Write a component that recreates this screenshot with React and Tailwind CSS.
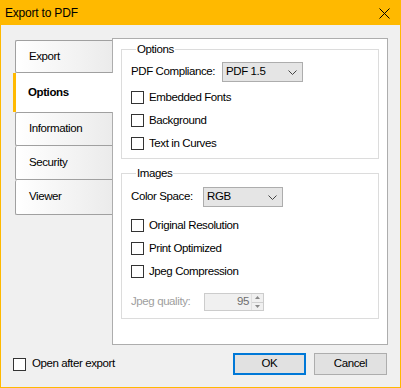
import React from "react";

const font = { fontFamily: '"Liberation Sans", Arial, sans-serif' };

function CheckBox({ label, className = "" }) {
  return (
    <div className={`flex items-center h-[23px] ${className}`}>
      <span className="w-[13px] h-[13px] border border-[#333] bg-white shrink-0" />
      <span className="ml-[5px] text-black whitespace-nowrap">{label}</span>
    </div>
  );
}

function Chevron() {
  return (
    <svg width="9" height="5" viewBox="0 0 9 5" className="shrink-0">
      <path d="M0.5 0.5 L4.5 4.5 L8.5 0.5" fill="none" stroke="#444" strokeWidth="1" />
    </svg>
  );
}

function Dropdown({ value, width }) {
  return (
    <div
      className={`flex items-center justify-between h-[20px] ${width} shrink-0 border border-[#adadad] bg-[#e5e5e5] pl-[3px] pr-[5px]`}
    >
      <span>{value}</span>
      <Chevron />
    </div>
  );
}

function Group({ title, children, className = "" }) {
  return (
    <fieldset className={`border border-[#dcdcdc] mx-[8px] px-[9px] ${className}`}>
      <legend className="ml-[5px] px-[1px] leading-[16px]">{title}</legend>
      {children}
    </fieldset>
  );
}

function Tab({ label, active, className = "" }) {
  if (active) {
    return (
      <div className="relative z-10 -mr-px h-[39px] flex items-center bg-white border-l-[3px] border-[#ffb900] pl-[12px] font-bold">
        {label}
      </div>
    );
  }
  return (
    <div
      className={`ml-[2px] flex items-center border-l border-[#a0a0a0] rounded-l-[2px] bg-linear-to-r from-white to-[#ebebeb] pl-[13px] ${className}`}
    >
      {label}
    </div>
  );
}

export default function App() {
  return (
    <div
      className="w-[401px] h-[388px] border border-[#ffb900] bg-[#f0f0f0] flex flex-col text-[11.5px] tracking-[-0.4px] text-black whitespace-nowrap"
      style={font}
    >
      <div className="h-[24px] bg-[#ffb900] flex items-center justify-between pl-[4px] pr-[10px]">
        <span className="text-[12px] tracking-[-0.2px]">Export to PDF</span>
        <svg width="11" height="11" viewBox="0 0 11 11">
          <path d="M0.5 0.5 L10.5 10.5 M10.5 0.5 L0.5 10.5" stroke="#000" strokeWidth="1" />
        </svg>
      </div>

      <div className="flex mt-[13px] pl-[12px] pr-[12px]">
        <div className="w-[99px] mt-[2px] flex flex-col">
          <Tab label="Export" className="h-[33px] border-t border-b" />
          <Tab label="Options" active />
          <Tab label="Information" className="h-[34px] border-t border-b" />
          <Tab label="Security" className="h-[34px] border-b" />
          <Tab label="Viewer" className="h-[35px] border-b" />
        </div>

        <div className="w-[276px] h-[307px] border border-[#adadad] bg-white flex flex-col">
          <Group title="Options" className="mt-[2px] pb-[3px]">
            <div className="flex items-center mt-[5px]">
              <span className="w-[91px]">PDF Compliance:</span>
              <Dropdown value="PDF 1.5" width="w-[81px]" />
            </div>
            <div className="mt-[4px]">
              <CheckBox label="Embedded Fonts" />
              <CheckBox label="Background" />
              <CheckBox label="Text in Curves" />
            </div>
          </Group>

          <Group title="Images" className="mt-[6px] pb-[7px]">
            <div className="flex items-center mt-[6px]">
              <span className="w-[72px]">Color Space:</span>
              <Dropdown value="RGB" width="w-[80px]" />
            </div>
            <div className="mt-[7px]">
              <CheckBox label="Original Resolution" />
              <CheckBox label="Print Optimized" />
              <CheckBox label="Jpeg Compression" />
            </div>
            <div className="flex items-center mt-[10px]">
              <span className="w-[73px] text-[#a0a0a0]">Jpeg quality:</span>
              <div className="w-[60px] h-[18px] border border-[#cccccc] bg-[#f0f0f0] flex items-center justify-end">
                <span className="text-[#6d6d6d] mr-[2px]">95</span>
                <div className="w-[12px] h-[16px] flex flex-col border-l border-[#e0e0e0]">
                  <div className="flex-1 flex items-center justify-center border-b border-[#d0d0d0]">
                    <svg width="5" height="3" viewBox="0 0 5 3">
                      <path d="M0 3 L2.5 0 L5 3 Z" fill="#888" />
                    </svg>
                  </div>
                  <div className="flex-1 flex items-center justify-center">
                    <svg width="5" height="3" viewBox="0 0 5 3">
                      <path d="M0 0 L2.5 3 L5 0 Z" fill="#888" />
                    </svg>
                  </div>
                </div>
              </div>
            </div>
          </Group>
        </div>
      </div>

      <div className="flex items-center h-[22px] mt-[8px] pl-[12px] pr-[13px]">
        <span className="w-[13px] h-[13px] border border-[#333] bg-white" />
        <span className="ml-[6px]">Open after export</span>
        <div className="ml-auto flex gap-[8px]">
          <button className="w-[73px] h-[22px] border-2 border-[#0078d7] bg-[#e1e1e1]">OK</button>
          <button className="w-[73px] h-[22px] border border-[#adadad] bg-[#e1e1e1]">Cancel</button>
        </div>
      </div>
    </div>
  );
}
